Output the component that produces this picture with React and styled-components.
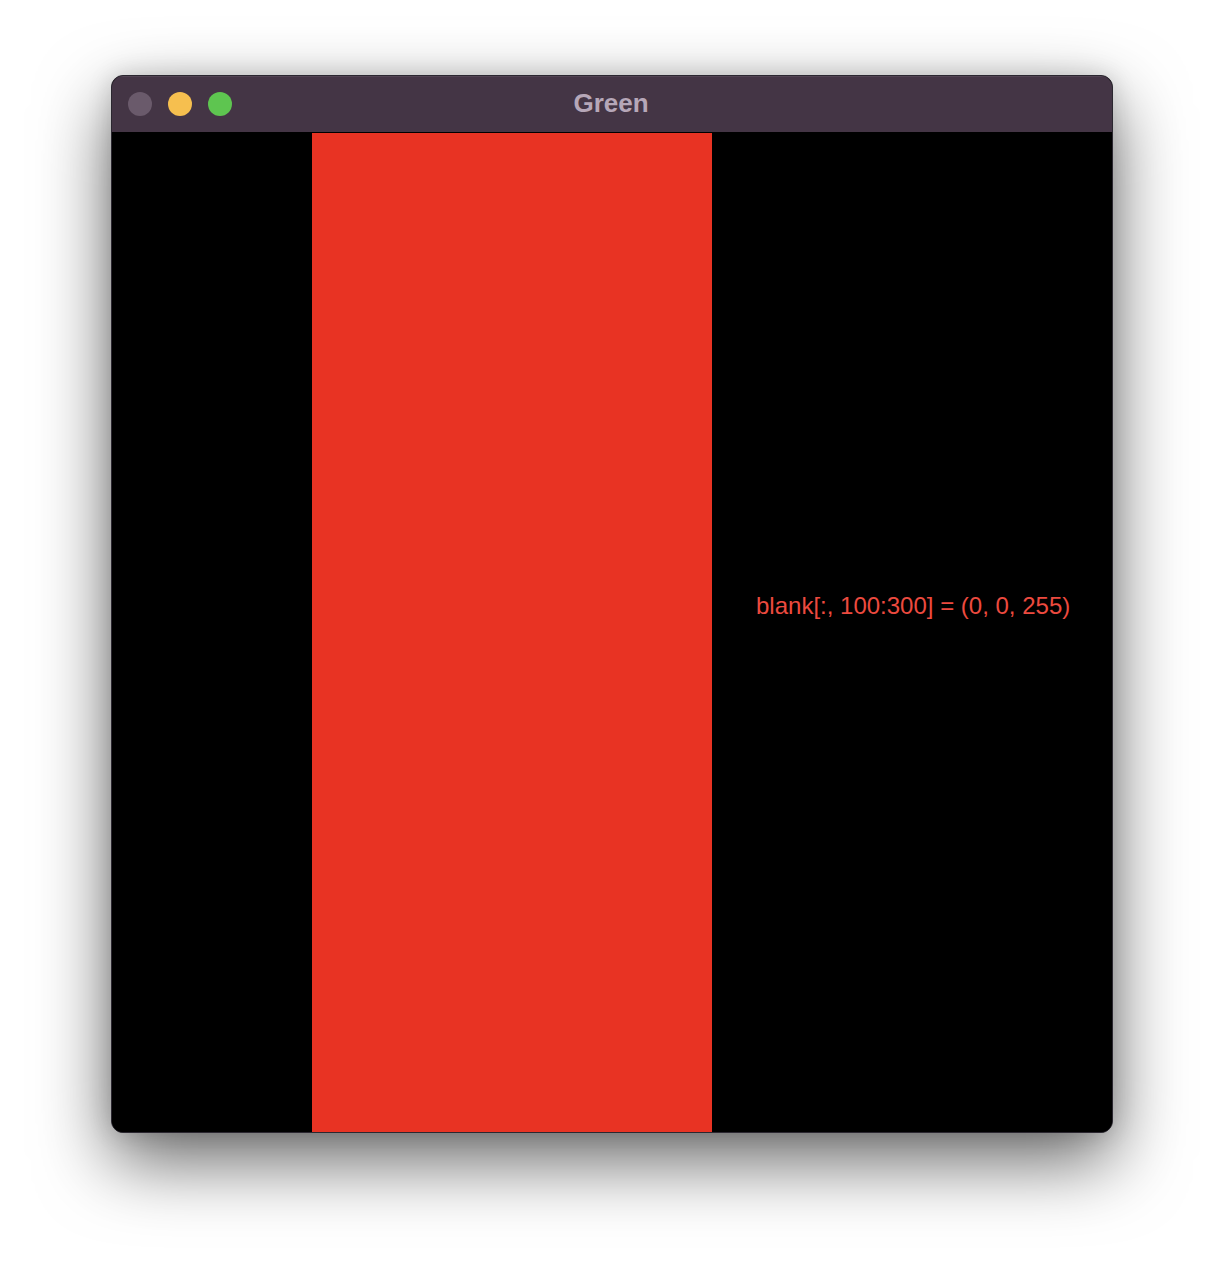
import React from "react";
import styled, { createGlobalStyle } from "styled-components";

const GlobalStyle = createGlobalStyle`
  html, body {
    margin: 0;
    padding: 0;
    background: #ffffff;
  }
  body {
    font-family: "Liberation Sans", Arial, sans-serif;
  }
`;

const Page = styled.div`
  width: 1224px;
  height: 1280px;
  display: flex;
  justify-content: center;
  align-items: flex-start;
  padding-top: 75px;
  box-sizing: border-box;
  background: #ffffff;
  overflow: hidden;
`;

const Window = styled.div`
  width: 1002px;
  box-sizing: border-box;
  border: 1px solid #2b2730;
  border-radius: 12px;
  overflow: hidden;
  background: #000;
  box-shadow: 0 28px 72px rgba(0, 0, 0, 0.6), 0 0 24px rgba(0, 0, 0, 0.14);
`;

const TitleBar = styled.div`
  height: 56px;
  display: grid;
  grid-template-columns: 1fr auto 1fr;
  align-items: center;
  background: #443545;
  border-bottom: 1px solid #000;
  box-shadow: inset 0 1px 0 rgba(255, 255, 255, 0.08);
  padding: 0 16px;
`;

const Lights = styled.div`
  display: flex;
  gap: 16px;
  align-items: center;
`;

const Light = styled.span`
  width: 24px;
  height: 24px;
  border-radius: 50%;
  background: ${(p) => p.$color};
  display: block;
`;

const Title = styled.div`
  font-family: "Liberation Sans", Arial, sans-serif;
  font-weight: 700;
  font-size: 26px;
  color: #b6a7b8;
  line-height: 1;
  margin-top: -3px;
  margin-right: 2px;
`;

const Content = styled.div`
  height: 999px;
  display: grid;
  grid-template-columns: 200px 400px 400px;
`;

const Panel = styled.div`
  background: ${(p) => p.$bg};
`;

const TextPanel = styled.div`
  background: #000;
  padding: 461px 0 0 44px;
`;

const Label = styled.div`
  font-family: "Liberation Sans", Arial, sans-serif;
  font-size: 24px;
  line-height: 24px;
  color: #ec4a3f;
  white-space: nowrap;
`;

export default function App() {
  return (
    <>
      <GlobalStyle />
      <Page>
        <Window>
          <TitleBar>
            <Lights>
              <Light $color="#6a5a6b" />
              <Light $color="#f6bf4f" />
              <Light $color="#5ec550" />
            </Lights>
            <Title>Green</Title>
            <span />
          </TitleBar>
          <Content>
            <Panel $bg="#000" />
            <Panel $bg="#e83323" />
            <TextPanel>
              <Label>blank[:, 100:300] = (0, 0, 255)</Label>
            </TextPanel>
          </Content>
        </Window>
      </Page>
    </>
  );
}
